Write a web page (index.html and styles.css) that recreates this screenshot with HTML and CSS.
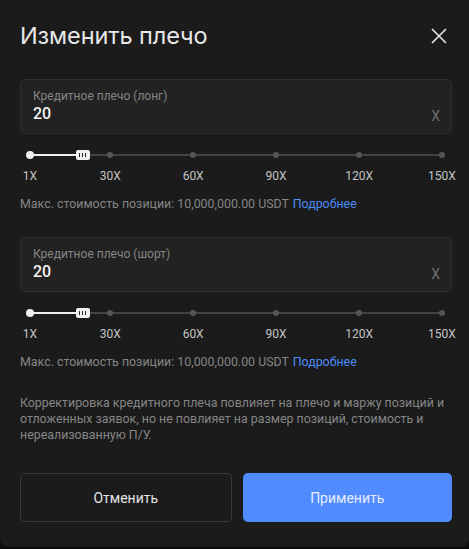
FILE: index.html
```html
<!DOCTYPE html>
<html lang="ru">
<head>
<meta charset="utf-8">
<link rel="stylesheet" href="styles.css">
</head>
<body>
<div class="panel">
  <div class="header">
    <div class="title">Изменить плечо</div>
    <svg class="close" width="16" height="16" viewBox="0 0 16 16"><path d="M1 1L15 15M15 1L1 15" stroke="#e6e6e6" stroke-width="1.6" fill="none"/></svg>
  </div>

  <div class="field">
    <div class="field-main">
      <div class="field-label">Кредитное плечо (лонг)</div>
      <div class="field-value">20</div>
    </div>
    <div class="field-unit">X</div>
  </div>
  <div class="slider">
    <div class="track"></div>
    <div class="fill" style="width:12.75%"></div>
    <span class="dot on" style="left:0%"></span>
    <span class="dot" style="left:19.46%"></span>
    <span class="dot" style="left:39.6%"></span>
    <span class="dot" style="left:59.73%"></span>
    <span class="dot" style="left:79.87%"></span>
    <span class="dot" style="left:100%"></span>
    <span class="thumb" style="left:12.75%"><i></i><i></i><i></i></span>
  </div>
  <div class="marks">
    <span style="left:0%">1X</span>
    <span style="left:19.46%">30X</span>
    <span style="left:39.6%">60X</span>
    <span style="left:59.73%">90X</span>
    <span style="left:79.87%">120X</span>
    <span style="left:100%">150X</span>
  </div>
  <div class="maxline">Макс. стоимость позиции: 10,000,000.00 USDT <a class="more">Подробнее</a></div>

  <div class="field second">
    <div class="field-main">
      <div class="field-label">Кредитное плечо (шорт)</div>
      <div class="field-value">20</div>
    </div>
    <div class="field-unit">X</div>
  </div>
  <div class="slider">
    <div class="track"></div>
    <div class="fill" style="width:12.75%"></div>
    <span class="dot on" style="left:0%"></span>
    <span class="dot" style="left:19.46%"></span>
    <span class="dot" style="left:39.6%"></span>
    <span class="dot" style="left:59.73%"></span>
    <span class="dot" style="left:79.87%"></span>
    <span class="dot" style="left:100%"></span>
    <span class="thumb" style="left:12.75%"><i></i><i></i><i></i></span>
  </div>
  <div class="marks">
    <span style="left:0%">1X</span>
    <span style="left:19.46%">30X</span>
    <span style="left:39.6%">60X</span>
    <span style="left:59.73%">90X</span>
    <span style="left:79.87%">120X</span>
    <span style="left:100%">150X</span>
  </div>
  <div class="maxline">Макс. стоимость позиции: 10,000,000.00 USDT <a class="more">Подробнее</a></div>

  <p class="note">Корректировка кредитного плеча повлияет на плечо и маржу позиций и отложенных заявок, но не повлияет на размер позиций, стоимость и нереализованную П/У.</p>

  <div class="actions">
    <button class="btn cancel">Отменить</button>
    <button class="btn apply">Применить</button>
  </div>
</div>
</body>
</html>
```

FILE: styles.css
```css
html, body {
  margin: 0;
  padding: 0;
  background: #0c0c0c;
}
body {
  width: 469px;
  height: 549px;
  overflow: hidden;
  font-family: "Roboto", "Inter", "Liberation Sans", sans-serif;
}
.panel {
  box-sizing: border-box;
  width: 469px;
  height: 547px;
  background: #1b1b1b;
  border-radius: 0 0 8px 8px;
  padding: 0 17px 0 20px;
}
.header {
  display: flex;
  align-items: center;
  justify-content: space-between;
  padding-top: 20px;
  height: 32px;
  margin-bottom: 27px;
}
.title {
  font-family: "Inter", "Roboto", sans-serif;
  font-size: 23.5px;
  line-height: 32px;
  color: #e8e8e8;
  letter-spacing: -0.1px;
}
.close {
  margin-top: -1px;
  margin-right: 5px;
}
.field {
  box-sizing: border-box;
  width: 432px;
  height: 55px;
  background: #222222;
  border: 1px solid #2f2f2f;
  border-radius: 5px;
  padding: 8px 11px 0 12px;
  display: flex;
  justify-content: space-between;
}
.field.second {
  margin-top: 25px;
}
.field-label {
  font-size: 12px;
  line-height: 16px;
  color: #858585;
}
.field-value {
  font-size: 16px;
  line-height: 20px;
  font-weight: 500;
  color: #f2f2f2;
}
.field-unit {
  align-self: flex-end;
  margin-bottom: 9px;
  font-size: 14px;
  line-height: 16px;
  color: #6e6e6e;
}
.slider {
  position: relative;
  height: 12px;
  margin: 15px 10px 0 10px;
  width: 412px;
}
.track {
  position: absolute;
  left: 0;
  right: 0;
  top: 5px;
  height: 2px;
  background: #444444;
}
.fill {
  position: absolute;
  left: 0;
  top: 5px;
  height: 2px;
  background: #f0f0f0;
}
.dot {
  position: absolute;
  top: 3px;
  width: 6px;
  height: 6px;
  margin-left: -3px;
  border-radius: 50%;
  background: #555555;
}
.dot.on {
  top: 2px;
  width: 8px;
  height: 8px;
  margin-left: -4px;
  background: #f0f0f0;
}
.thumb {
  position: absolute;
  top: 1px;
  width: 14px;
  height: 10px;
  margin-left: -7px;
  border-radius: 2px;
  background: #f0f0f0;
  display: flex;
  align-items: center;
  justify-content: center;
  gap: 2px;
}
.thumb i {
  display: block;
  width: 1px;
  height: 4px;
  background: #222;
}
.marks {
  position: relative;
  width: 412px;
  margin: 7px 10px 0 10px;
  height: 16px;
}
.marks span {
  position: absolute;
  top: 0;
  transform: translateX(-50%);
  font-size: 12px;
  line-height: 16px;
  color: #c4c4c4;
  white-space: nowrap;
}
.maxline {
  margin-top: 12px;
  font-size: 12.4px;
  line-height: 16px;
  color: #858585;
  white-space: nowrap;
}
.more {
  color: #4b8bf5;
  margin-left: 1px;
}
.note {
  margin: 25px 0 0 0;
  width: 432px;
  font-size: 12.4px;
  line-height: 16px;
  color: #858585;
}
.actions {
  display: flex;
  gap: 11px;
  margin-top: 30px;
  width: 432px;
}
.btn {
  flex: 1 1 0;
  width: 0;
  height: 49px;
  border-radius: 5px;
  font-family: "Roboto", "Inter", sans-serif;
  font-size: 14px;
  cursor: pointer;
}
.cancel {
  background: #1b1b1b;
  border: 1px solid #3a3a3a;
  color: #e4e4e4;
}
.apply {
  background: #508cff;
  border: none;
  color: #e6edff;
}
```
